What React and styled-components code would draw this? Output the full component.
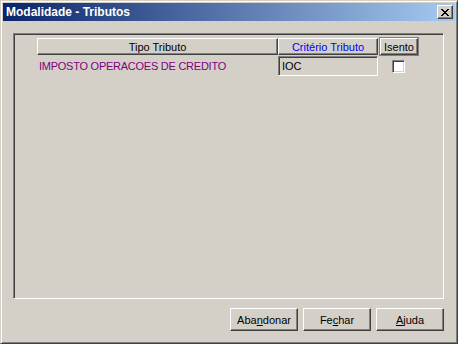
import styled, { createGlobalStyle } from "styled-components";

const Global = createGlobalStyle`
    html, body {
        margin: 0;
        padding: 0;
        background: #D4D0C8;
    }
    * {
        box-sizing: border-box;
    }
`;

const Janela = styled.div`
    width: 458px;
    height: 344px;
    background: #D4D0C8;
    border: 1px solid;
    border-color: #D4D0C8 #404040 #404040 #D4D0C8;
    box-shadow: inset 1px 1px #FFFFFF, inset -1px -1px #808080;
    padding: 2px;
    display: flex;
    flex-direction: column;
    font-family: "Liberation Sans", Arial, sans-serif;
    font-size: 11px;
    color: #000000;
`;

const BarraTitulo = styled.div`
    height: 18px;
    flex-shrink: 0;
    display: flex;
    align-items: center;
    justify-content: space-between;
    padding: 0 2px 0 3px;
    background: linear-gradient(to right, #0A246A, #A6CAF0);
    color: #FFFFFF;
    font-weight: bold;
    font-size: 12px;
`;

const BotaoFechar = styled.div`
    width: 16px;
    height: 14px;
    background: #D4D0C8;
    border: 1px solid;
    border-color: #FFFFFF #404040 #404040 #FFFFFF;
    box-shadow: inset -1px -1px #808080;
    display: flex;
    justify-content: center;
    align-items: center;
    padding-right: 1px;
    svg {
        display: block;
    }
`;

const Corpo = styled.div`
    flex: 1;
    display: flex;
    flex-direction: column;
    padding: 12px 11px 0 10px;
`;

const Quadro = styled.div`
    height: 266px;
    border: 1px solid;
    border-color: #808080 #FFFFFF #FFFFFF #808080;
    box-shadow: inset 1px 1px #404040;
    padding: 4px 0 0 23px;
`;

const Linha = styled.div`
    display: flex;
    align-items: flex-start;
    margin-top: ${props => props.$topo || 0}px;
`;

const Cabecalho = styled.div`
    width: ${props => props.$largura}px;
    height: 17px;
    margin-left: ${props => props.$moldura ? 2 : 0}px;
    border: 1px solid;
    border-color: #FFFFFF #404040 #404040 #FFFFFF;
    box-shadow: inset -1px -1px #808080;
    outline: ${props => props.$moldura ? "1px solid #808080" : "none"};
    display: flex;
    justify-content: center;
    align-items: center;
    color: ${props => props.$cor || "#000000"};
    white-space: nowrap;
`;

const NomeTributo = styled.div`
    width: 241px;
    height: 20px;
    padding-left: 2px;
    display: flex;
    align-items: center;
    color: #800080;
    white-space: nowrap;
    letter-spacing: -0.25px;
`;

const Campo = styled.div`
    width: 100px;
    height: 20px;
    border: 1px solid;
    border-color: #808080 #FFFFFF #FFFFFF #808080;
    box-shadow: inset 1px 1px #404040;
    padding-left: 3px;
    display: flex;
    align-items: center;
`;

const Caixa = styled.div`
    width: 13px;
    height: 13px;
    margin: 4px 0 0 14px;
    background: #FFFFFF;
    border: 1px solid;
    border-color: #808080 #FFFFFF #FFFFFF #808080;
    box-shadow: inset 1px 1px #404040, inset -1px -1px #D4D0C8;
`;

const Rodape = styled.div`
    display: flex;
    justify-content: flex-end;
    gap: 5px;
    margin-top: 9px;
`;

const Botao = styled.div`
    width: 68px;
    height: 23px;
    border: 1px solid;
    border-color: #FFFFFF #404040 #404040 #FFFFFF;
    box-shadow: inset -1px -1px #808080;
    display: flex;
    justify-content: center;
    align-items: center;
    u {
        text-decoration: underline;
        text-underline-offset: 1px;
    }
`;

function IconeFechar() {
    const pixels = [
        [0, 0], [1, 0], [6, 0], [7, 0],
        [1, 1], [2, 1], [5, 1], [6, 1],
        [2, 2], [3, 2], [4, 2], [5, 2],
        [3, 3], [4, 3],
        [2, 4], [3, 4], [4, 4], [5, 4],
        [1, 5], [2, 5], [5, 5], [6, 5],
        [0, 6], [1, 6], [6, 6], [7, 6],
    ];
    return (
        <svg width="8" height="7" viewBox="0 0 8 7" shapeRendering="crispEdges">
            {pixels.map(([x, y]) => <rect key={`${x}-${y}`} x={x} y={y} width="1" height="1" fill="#000" />)}
        </svg>
    );
}

export default function App() {
    return (
        <>
            <Global />
            <Janela>
                <BarraTitulo>
                    <span>Modalidade - Tributos</span>
                    <BotaoFechar><IconeFechar /></BotaoFechar>
                </BarraTitulo>
                <Corpo>
                    <Quadro>
                        <Linha>
                            <Cabecalho $largura={241}>Tipo Tributo</Cabecalho>
                            <Cabecalho $largura={100} $cor="#0000FF">Critério Tributo</Cabecalho>
                            <Cabecalho $largura={38} $moldura>Isento</Cabecalho>
                        </Linha>
                        <Linha $topo={1}>
                            <NomeTributo>IMPOSTO OPERACOES DE CREDITO</NomeTributo>
                            <Campo>IOC</Campo>
                            <Caixa />
                        </Linha>
                    </Quadro>
                    <Rodape>
                        <Botao>Aba<u>n</u>donar</Botao>
                        <Botao>Fe<u>c</u>har</Botao>
                        <Botao><u>A</u>juda</Botao>
                    </Rodape>
                </Corpo>
            </Janela>
        </>
    );
}
